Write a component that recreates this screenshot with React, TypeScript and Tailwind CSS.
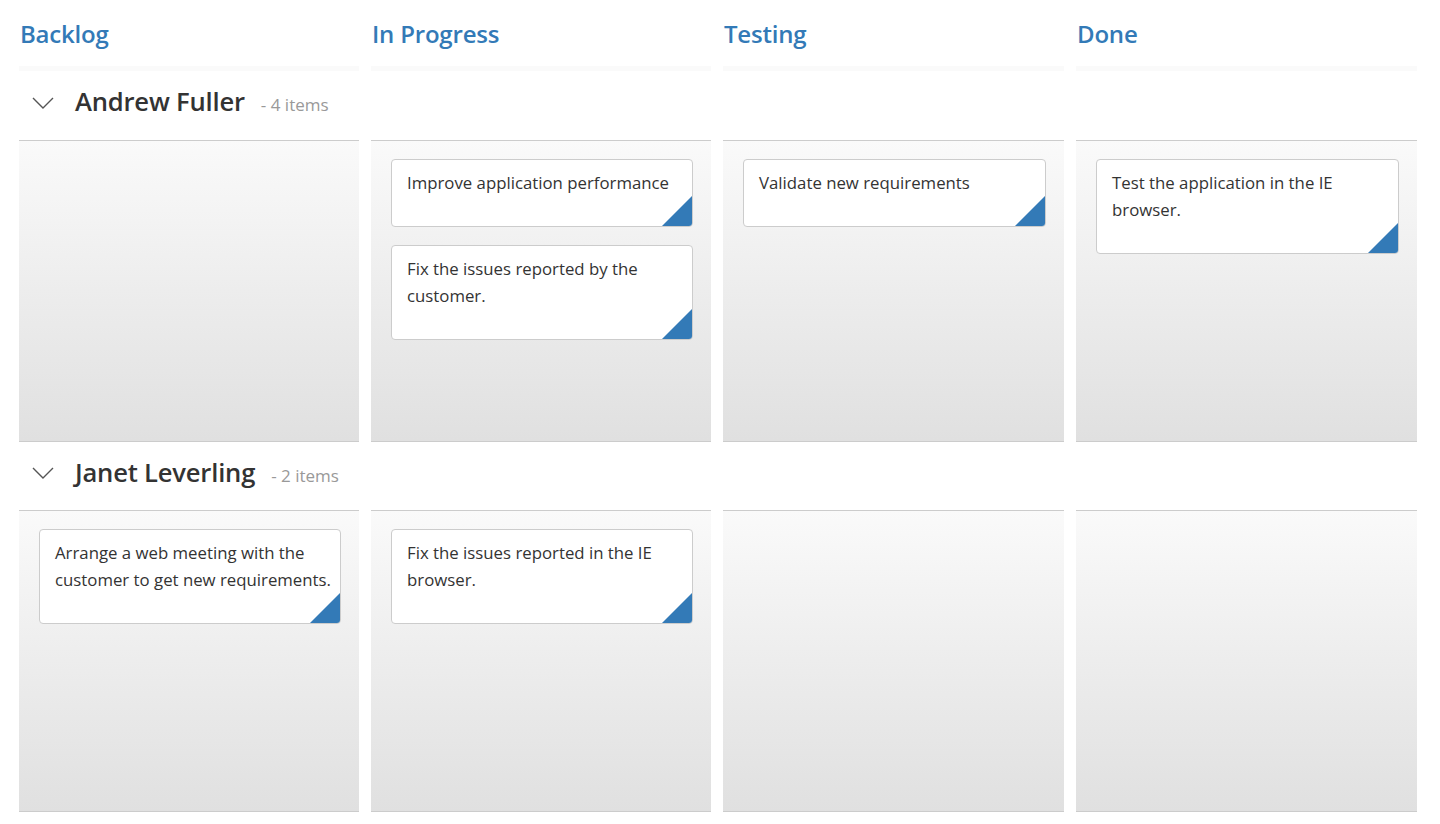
import React from "react";

type Card = { text: string };
type Lane = { name: string; count: number; cells: Card[][]; headerH: string };

const columns = ["Backlog", "In Progress", "Testing", "Done"];

const lanes: Lane[] = [
  {
    name: "Andrew Fuller",
    count: 4,
    headerH: "h-[69px]",
    cells: [
      [],
      [
        { text: "Improve application performance" },
        { text: "Fix the issues reported by the customer." },
      ],
      [{ text: "Validate new requirements" }],
      [{ text: "Test the application in the IE browser." }],
    ],
  },
  {
    name: "Janet Leverling",
    count: 2,
    headerH: "h-[68px]",
    cells: [
      [{ text: "Arrange a web meeting with the customer to get new requirements." }],
      [{ text: "Fix the issues reported in the IE browser." }],
      [],
      [],
    ],
  },
];

function CardView({ text }: Card) {
  return (
    <div className="relative bg-white border border-[#cccccc] rounded-[4px] pt-[9px] pb-[30px] pl-[15px] pr-[4px] overflow-hidden">
      <div className="text-[16.8px] leading-[27px] text-[#333333]">{text}</div>
      <svg
        className="absolute right-0 bottom-0"
        width="30"
        height="30"
        viewBox="0 0 30 30"
      >
        <polygon points="30,0 30,30 0,30" fill="#337ab7" />
      </svg>
    </div>
  );
}

function Chevron() {
  return (
    <svg width="22" height="12" viewBox="0 0 22 12" className="shrink-0">
      <polyline
        points="1,1 11,11 21,1"
        fill="none"
        stroke="#555555"
        strokeWidth="1.4"
      />
    </svg>
  );
}

export default function App() {
  return (
    <div
      className="w-[1440px] h-[824px] bg-white overflow-hidden"
      style={{ fontFamily: '"Open Sans", "Noto Sans", sans-serif' }}
    >
      <div className="ml-[19px] w-[1398px]">
        {/* Column headers */}
        <div className="grid grid-cols-[340px_340px_341px_341px] gap-x-[12px]">
          {columns.map((c) => (
            <div key={c} className="flex flex-col">
              <div className="h-[66px] flex items-center pl-[1px] pt-[2px] text-[24px] font-semibold text-[#337ab7] tracking-[-0.2px]">
                {c}
              </div>
              <div className="h-[5px] bg-[#fafafa]" />
            </div>
          ))}
        </div>

        {lanes.map((lane) => (
          <div key={lane.name}>
            <div className={`${lane.headerH} flex items-center pl-[13px] pb-[6px]`}>
              <Chevron />
              <span className="ml-[21px] text-[25.6px] font-semibold text-[#333333] tracking-[-0.2px]">
                {lane.name}
              </span>
              <span className="ml-[16px] mt-[5px] text-[17px] text-[#999999]">
                - {lane.count} items
              </span>
            </div>
            <div className="grid grid-cols-[340px_340px_341px_341px] gap-x-[12px]">
              {lane.cells.map((cards, i) => (
                <div
                  key={i}
                  className="h-[302px] border-t border-b border-[#cccccc] bg-gradient-to-b from-[#fafafa] to-[#e0e0e0] pt-[18px] pl-[20px] pr-[18px] flex flex-col gap-[18px]"
                >
                  {cards.map((c) => (
                    <CardView key={c.text} text={c.text} />
                  ))}
                </div>
              ))}
            </div>
          </div>
        ))}
      </div>
    </div>
  );
}
